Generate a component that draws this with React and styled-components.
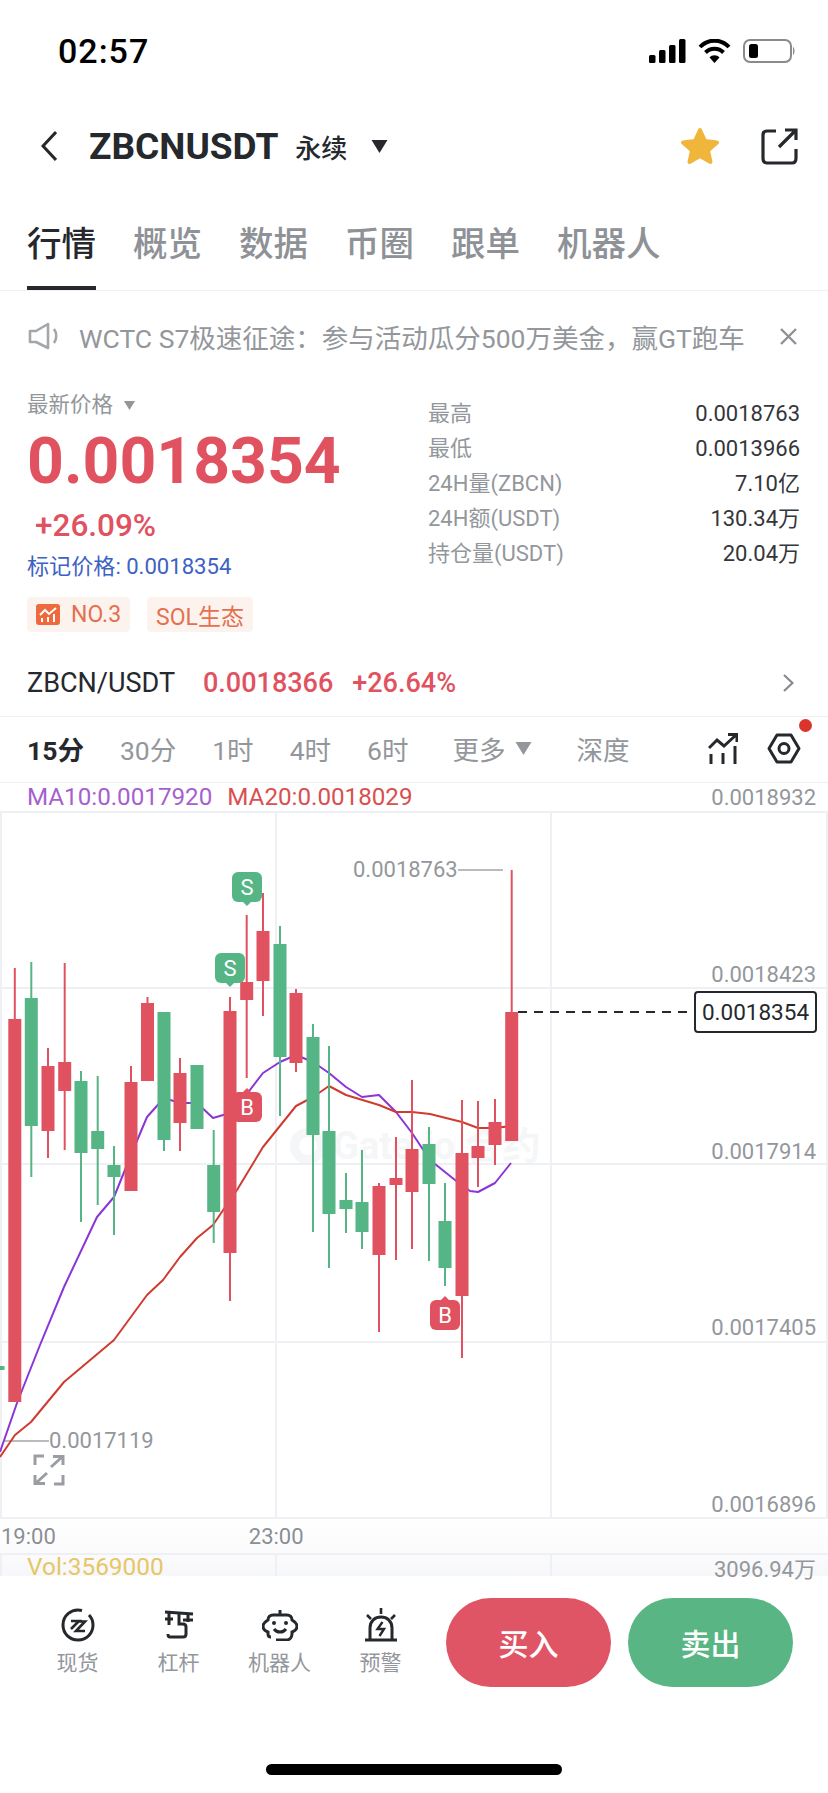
import React from "react";
import styled, { createGlobalStyle } from "styled-components";

const RED = "#e0525f";
const GREEN = "#55b584";
const GREY = "#93979c";
const DARK = "#25282c";
const LINE = "#eef0f4";

const GlobalStyle = createGlobalStyle`
  html, body { margin: 0; padding: 0; background: #fff; }
  body { font-family: Roboto, "Noto Sans CJK SC", sans-serif; color: ${DARK}; }
  * { box-sizing: border-box; }
`;

// [x, wickTop, bodyTop, bodyBottom, wickBottom, colour]
const candles = [
  [-2, 1366, 1366, 1370, 1370, "g"],
  [14.8, 968, 1019, 1402, 1402, "r"],
  [31.3, 962, 998, 1126, 1177, "g"],
  [48, 1048, 1066, 1131, 1158, "r"],
  [64.7, 963, 1062, 1091, 1150, "r"],
  [81, 1071, 1081, 1153, 1222, "g"],
  [97.7, 1076, 1131, 1149, 1205, "g"],
  [114, 1146, 1165, 1177, 1235, "g"],
  [131, 1066, 1082, 1191, 1191, "r"],
  [147.5, 997, 1003, 1081, 1081, "r"],
  [164, 1012, 1012, 1140, 1151, "g"],
  [180, 1058, 1073, 1123, 1151, "r"],
  [197, 1065, 1065, 1129, 1129, "g"],
  [213.7, 1130, 1165, 1212, 1243, "g"],
  [230, 997, 1011, 1253, 1301, "r"],
  [246.7, 915, 982, 1000, 1078, "r"],
  [263, 893, 931, 981, 1016, "r"],
  [280, 926, 944, 1057, 1116, "g"],
  [296, 989, 993, 1063, 1072, "r"],
  [313, 1024, 1037, 1135, 1232, "g"],
  [329, 1046, 1131, 1214, 1268, "g"],
  [346, 1173, 1200, 1209, 1233, "g"],
  [362, 1150, 1202, 1232, 1249, "g"],
  [379, 1183, 1186, 1255, 1332, "r"],
  [396, 1137, 1178, 1185, 1260, "r"],
  [412, 1080, 1149, 1192, 1249, "r"],
  [429, 1127, 1144, 1184, 1261, "g"],
  [445, 1183, 1221, 1268, 1286, "g"],
  [462, 1100, 1153, 1296, 1358, "r"],
  [478, 1101, 1146, 1158, 1187, "r"],
  [495, 1099, 1122, 1145, 1165, "r"],
  [511.7, 870, 1012, 1141, 1141, "r"],
];

const ma10 =
  "0,1452 17,1403 40,1345 64,1287 97,1217 114,1197 131,1155 147,1117 164,1098 180,1103 197,1103 213,1118 230,1113 246,1095 263,1073 280,1062 296,1055 313,1062 329,1073 346,1087 362,1097 379,1095 396,1112 412,1133 430,1160 455,1180 470,1191 478,1192 495,1183 511,1163";
const ma20 =
  "0,1457 15,1435 31,1422 64,1382 114,1340 147,1295 163,1280 180,1257 197,1238 213,1225 230,1200 237,1190 263,1147 296,1106 313,1097 329,1086 346,1095 379,1105 396,1112 412,1112 430,1114 462,1122 478,1128 495,1128 511,1126";

const axisPrices = [
  ["0.0018423", 975],
  ["0.0017914", 1152],
  ["0.0017405", 1328],
  ["0.0016896", 1505],
];

const Page = styled.div`
  width: 828px;
  height: 1793px;
  overflow: hidden;
  background: #fff;
  display: flex;
  flex-direction: column;
`;

const StatusBar = styled.div`
  height: 102px;
  padding: 0 33px 0 58px;
  display: flex;
  justify-content: space-between;
  align-items: flex-start;
`;

const Time = styled.div`
  margin-top: 33px;
  font-size: 34px;
  line-height: 36px;
  letter-spacing: 1px;
  font-weight: 500;
  color: #000;
`;

const StatusIcons = styled.div`
  margin-top: 39px;
  display: flex;
  align-items: center;
  gap: 12px;
`;

const Header = styled.div`
  height: 88px;
  padding: 0 30px 0 41px;
  display: flex;
  align-items: center;
`;

const Symbol = styled.div`
  margin-left: 32px;
  font-size: 37px;
  font-weight: 700;
  color: ${DARK};
`;

const Suffix = styled.div`
  margin-left: 17px;
  font-size: 26px;
  font-weight: 500;
`;

const Caret = styled.div`
  margin-left: 24px;
  display: flex;
`;

const HeaderRight = styled.div`
  margin-left: auto;
  display: flex;
  align-items: center;
  gap: 41px;
`;

const Tabs = styled.div`
  height: 101px;
  padding: 0 27px;
  display: flex;
  gap: 37px;
  border-bottom: 1px solid ${LINE};
`;

const Tab = styled.div`
  height: 100px;
  padding-top: 32px;
  font-size: 34.5px;
  line-height: 44px;
  font-weight: 500;
  color: ${(p) => (p.$active ? DARK : "#8e9297")};
  border-bottom: 4px solid ${(p) => (p.$active ? DARK : "transparent")};
`;

const Notice = styled.div`
  height: 90px;
  padding: 0 31px 0 28px;
  display: flex;
  align-items: center;
`;

const NoticeText = styled.div`
  margin-left: 19px;
  font-size: 26.5px;
  color: ${GREY};
  white-space: nowrap;
`;

const NoticeClose = styled.div`
  margin-left: auto;
  display: flex;
`;

const Market = styled.div`
  height: 269px;
  padding: 0 28px 0 27px;
  display: flex;
`;

const PriceCol = styled.div`
  width: 401px;
  padding-top: 13px;
`;

const PriceLabel = styled.div`
  display: flex;
  align-items: center;
  gap: 10px;
  font-size: 21.5px;
  line-height: 22px;
  color: ${GREY};
`;

const BigPrice = styled.div`
  margin-top: 12px;
  font-size: 64.3px;
  line-height: 66px;
  font-weight: 700;
  color: ${RED};
`;

const Change = styled.div`
  margin: 14px 0 0 8px;
  font-size: 31.5px;
  line-height: 36px;
  font-weight: 500;
  color: ${RED};
`;

const MarkPrice = styled.div`
  margin-top: 9px;
  font-size: 22.1px;
  line-height: 26px;
  color: #3d62c4;
`;

const TagRow = styled.div`
  margin-top: 18px;
  display: flex;
  gap: 17px;
`;

const Tag = styled.div`
  height: 35px;
  padding: 0 9px;
  display: flex;
  align-items: center;
  gap: 11px;
  border-radius: 4px;
  background: #fdf3ee;
  color: #e4704f;
  font-size: 23px;
`;

const StatsCol = styled.div`
  flex: 1;
  padding-top: 14.5px;
`;

const StatRow = styled.div`
  height: 35px;
  display: flex;
  justify-content: space-between;
  align-items: baseline;
  font-size: 22px;
  line-height: 35px;
`;

const StatLabel = styled.span`
  color: ${GREY};
`;

const StatValue = styled.span`
  color: #33363a;
`;

const SpotRow = styled.div`
  height: 67px;
  padding: 0 34px 0 27px;
  display: flex;
  align-items: center;
  border-bottom: 1px solid ${LINE};
  font-size: 27px;
`;

const SpotName = styled.span`
  color: ${DARK};
`;

const SpotPrice = styled.span`
  margin-left: ${(p) => p.$gap}px;
  color: ${RED};
  font-weight: 500;
`;

const SpotArrow = styled.div`
  margin-left: auto;
  display: flex;
`;

const Periods = styled.div`
  position: relative;
  height: 66px;
  padding: 0 27px 2px;
  display: flex;
  align-items: center;
  gap: 36px;
  border-bottom: 1px solid ${LINE};
`;

const Period = styled.div`
  margin-left: ${(p) => p.$shift || 0}px;
  display: flex;
  align-items: center;
  gap: 10px;
  font-size: 26.5px;
  font-weight: ${(p) => (p.$active ? 700 : 400)};
  color: ${(p) => (p.$active ? DARK : GREY)};
`;

const PeriodIcons = styled.div`
  margin-left: auto;
  display: flex;
  align-items: center;
  gap: 29px;
`;

const RedDot = styled.div`
  position: absolute;
  top: 2px;
  right: 16px;
  width: 13px;
  height: 13px;
  border-radius: 50%;
  background: #d9352c;
`;

const MaRow = styled.div`
  height: 28px;
  padding: 0 12px 0 27px;
  display: flex;
  align-items: center;
  gap: 15px;
  font-size: 24.2px;
`;

const MaValue = styled.span`
  color: ${(p) => p.$color};
`;

const AxisTop = styled.span`
  margin-left: auto;
  font-size: 22px;
  color: ${GREY};
`;

const Chart = styled.div`
  position: relative;
  height: 708px;
  overflow: hidden;
`;

const ChartSvg = styled.svg`
  position: absolute;
  inset: 0;
  display: block;
`;

const Watermark = styled.div`
  position: absolute;
  left: 290px;
  top: 314px;
  display: flex;
  align-items: center;
  gap: 7px;
  font-size: 38px;
  line-height: 42px;
  font-weight: 700;
  color: #f5f6f7;
  white-space: nowrap;
`;

const WatermarkRing = styled.span`
  width: 36px;
  height: 36px;
  border-radius: 50%;
  border: 9px solid #f5f6f7;
`;

const AxisPrice = styled.div`
  position: absolute;
  right: 12px;
  top: ${(p) => p.$y - 811 - 13}px;
  font-size: 22px;
  line-height: 26px;
  color: ${GREY};
`;

const Extreme = styled.div`
  position: absolute;
  left: ${(p) => p.$x}px;
  top: ${(p) => p.$y - 811 - 13}px;
  font-size: 22px;
  line-height: 26px;
  color: ${GREY};
`;

const PriceBox = styled.div`
  position: absolute;
  left: 694px;
  top: 180px;
  width: 123px;
  height: 42px;
  display: flex;
  align-items: center;
  justify-content: center;
  background: #fff;
  border: 2px solid ${DARK};
  border-radius: 4px;
  font-size: 22.5px;
  color: ${DARK};
`;

const Mark = styled.div`
  position: absolute;
  left: ${(p) => p.$x}px;
  top: ${(p) => p.$y - 811}px;
  width: 30px;
  height: 30px;
  display: flex;
  align-items: center;
  justify-content: center;
  border-radius: 6px;
  background: ${(p) => (p.$buy ? RED : GREEN)};
  color: #fff;
  font-size: 22px;

  &::after {
    content: "";
    position: absolute;
    left: 11px;
    ${(p) => (p.$buy ? "top: -4px;" : "bottom: -4px;")}
    border-left: 4px solid transparent;
    border-right: 4px solid transparent;
    ${(p) => (p.$buy ? `border-bottom: 4px solid ${RED};` : `border-top: 4px solid ${GREEN};`)}
  }
`;

const ExpandIcon = styled.svg`
  position: absolute;
  left: 33px;
  top: 643px;
`;

const TimeAxis = styled.div`
  height: 34px;
  padding-left: 1px;
  display: flex;
  align-items: center;
  gap: 193px;
  font-size: 22px;
  color: #8b8f94;
  background: linear-gradient(#fff, #fbfbfd);
`;

const VolRow = styled.div`
  height: 23px;
  padding: 2px 12px 0 27px;
  display: flex;
  justify-content: space-between;
  align-items: center;
  border-top: 2px solid ${LINE};
  background:
    linear-gradient(${LINE}, ${LINE}) 0 0 / 2px 100% no-repeat,
    linear-gradient(${LINE}, ${LINE}) 275px 0 / 2px 100% no-repeat,
    linear-gradient(${LINE}, ${LINE}) 550px 0 / 2px 100% no-repeat,
    linear-gradient(#fbfbfd, #f6f7f9);
`;

const VolLabel = styled.span`
  font-size: 24.4px;
  color: #e6c667;
`;

const VolValue = styled.span`
  font-size: 22px;
  color: ${GREY};
`;

const BottomBar = styled.div`
  flex: 1;
  display: flex;
  flex-direction: column;
`;

const Actions = styled.div`
  height: 111px;
  padding: 22px 0 0 27px;
  display: flex;
`;

const NavItem = styled.div`
  width: 101px;
  display: flex;
  flex-direction: column;
  align-items: center;
`;

const NavIcon = styled.div`
  height: 36px;
  margin-top: 9px;
  display: flex;
  align-items: center;
`;

const NavLabel = styled.div`
  margin-top: 6px;
  font-size: 21px;
  line-height: 28px;
  color: ${GREY};
`;

const TradeButton = styled.div`
  width: 165px;
  height: 89px;
  margin-left: ${(p) => p.$gap}px;
  padding-bottom: 1px;
  display: flex;
  align-items: center;
  justify-content: center;
  border-radius: 45px;
  background: ${(p) => p.$color};
  color: #fff;
  font-size: 30px;
  font-weight: 500;
`;

const HomeIndicator = styled.div`
  width: 296px;
  height: 11px;
  margin: 77px auto 0;
  border-radius: 6px;
  background: #000;
`;

const Triangle = ({ w, h, color }) => (
  <svg width={w} height={h} viewBox="0 0 16 13">
    <path d="M0 0H16L8 13Z" fill={color} />
  </svg>
);

const Signal = () => (
  <svg width="37" height="24" viewBox="0 0 37 24" fill="#000">
    <rect x="0" y="16" width="6.5" height="8" rx="1.5" />
    <rect x="10" y="11" width="6.5" height="13" rx="1.5" />
    <rect x="20" y="6" width="6.5" height="18" rx="1.5" />
    <rect x="30" y="0" width="6.5" height="24" rx="1.5" />
  </svg>
);

const Wifi = () => (
  <svg width="33" height="24" viewBox="0 0 33 24" fill="none" stroke="#000" strokeWidth="4">
    <path d="M2 8C10-.5 23-.5 31 8" />
    <path d="M7.5 13.5C12.5 8.5 20.5 8.5 25.5 13.5" />
    <path d="M16.5 24L11.5 18.5C14 15.5 19 15.5 21.5 18.5Z" fill="#000" stroke="none" />
  </svg>
);

const Battery = () => (
  <svg width="52" height="24" viewBox="0 0 52 24">
    <rect x="1" y="1" width="47" height="22" rx="6" fill="none" stroke="#8a8a8a" strokeWidth="2" />
    <rect x="6" y="5" width="9" height="14" rx="2.5" fill="#000" />
    <path d="M50 8C52 9 52 15 50 16Z" fill="#8a8a8a" />
  </svg>
);

const BackIcon = () => (
  <svg width="16" height="30" viewBox="0 0 16 30" fill="none" stroke={DARK} strokeWidth="3">
    <path d="M15 1L2 15L15 29" />
  </svg>
);

const StarIcon = () => (
  <svg width="40" height="38" viewBox="0 0 40 38">
    <path
      d="M20 3L25 14L37 15.5L28 23.5L30.5 35L20 29L9.5 35L12 23.5L3 15.5L15 14Z"
      fill="#f0b63c"
      stroke="#f0b63c"
      strokeWidth="4"
      strokeLinejoin="round"
    />
  </svg>
);

const ShareIcon = () => (
  <svg width="37" height="37" viewBox="0 0 37 37" fill="none" stroke={DARK} strokeWidth="3.2">
    <path d="M15 3H6Q2 3 2 7V30Q2 35 6 35H31Q35 35 35 30V21" />
    <path d="M18 19L35 2M24 2H35V12" />
  </svg>
);

const SpeakerIcon = () => (
  <svg width="32" height="28" viewBox="0 0 32 28" fill="none" stroke="#a3a6aa" strokeWidth="2.6">
    <path d="M2 9H8L20 2V26L8 20H2Z" strokeLinejoin="round" />
    <path d="M26 7C29 11 29 17 26 21" />
  </svg>
);

const CloseIcon = () => (
  <svg width="17" height="17" viewBox="0 0 17 17" stroke="#8e9297" strokeWidth="2.4">
    <path d="M1 1L16 16M16 1L1 16" />
  </svg>
);

const RankIcon = () => (
  <svg width="24" height="21" viewBox="0 0 24 21">
    <rect width="24" height="21" rx="3" fill="#ee6a3c" />
    <path d="M4 11L9 6L13 10L20 4" fill="none" stroke="#fff" strokeWidth="2" />
    <path d="M6 14V18M12 13V18M18 10V18" stroke="#fff" strokeWidth="2" />
  </svg>
);

const Chevron = () => (
  <svg width="11" height="18" viewBox="0 0 11 18" fill="none" stroke="#85898e" strokeWidth="2.2">
    <path d="M1 1L9.5 9L1 17" />
  </svg>
);

const TrendIcon = () => (
  <svg width="30" height="32" viewBox="0 0 30 32" fill="none" stroke={DARK} strokeWidth="3">
    <path d="M1 15L9 7L16 13L28 2M20 1.5H29V9" />
    <path d="M3 21V31M15 20V31M27 13V31" />
  </svg>
);

const HexIcon = () => (
  <svg width="34" height="31" viewBox="0 0 34 31" fill="none" stroke={DARK} strokeWidth="3">
    <path d="M2 15.5L10 2H24L32 15.5L24 29H10Z" strokeLinejoin="round" />
    <circle cx="17" cy="15.5" r="5" />
  </svg>
);

const SpotIcon = () => (
  <svg width="34" height="34" viewBox="0 0 34 34" fill="none" stroke={DARK} strokeWidth="3">
    <path d="M21 2.5C10 0 2 8 2 17C2 26 9 32 17 32C26 32 32 25 32 17C32 13 31 10 28 7" />
    <path d="M10 13H18L10 21M16 13.5H24L15 23H24" strokeWidth="2.6" />
  </svg>
);

const LeverIcon = () => (
  <svg width="30" height="30" viewBox="0 0 30 30" fill="none" stroke={DARK} strokeWidth="3">
    <path d="M1 2L29 4" />
    <path d="M5 3V15M1 9H9" />
    <path d="M15 3V14H19Q22 14 22 17V24Q22 27 19 27H6Q4 27 4 24" />
    <path d="M24 4V12M19 10H29" />
  </svg>
);

const RobotIcon = () => (
  <svg width="36" height="32" viewBox="0 0 36 32" fill="none" stroke={DARK} strokeWidth="3">
    <path d="M18 1V6" />
    <path d="M9 28C7 28 6 27 6 25V23C3 22 1 20 1 17C1 14 3 13 6 11C6 8 8 6 11 6H25C28 6 30 8 30 11C33 13 35 14 35 17C35 20 33 22 30 23V25C30 29 27 31 25 31H14" />
    <circle cx="12" cy="14" r="2" fill={DARK} stroke="none" />
    <circle cx="24" cy="14" r="2" fill={DARK} stroke="none" />
    <path d="M12 20C15 24 21 24 24 20" />
  </svg>
);

const AlarmIcon = () => (
  <svg width="34" height="34" viewBox="0 0 34 34" fill="none" stroke={DARK} strokeWidth="3">
    <path d="M17 0V6M3 7L7 11M31 7L27 11" strokeWidth="2.6" />
    <path d="M6 32V20C6 13 11 9 17 9C23 9 28 13 28 20V32" />
    <path d="M1 32H33" />
    <path d="M18.5 14L13.5 21H20L15.5 28" strokeWidth="2.4" />
  </svg>
);

const CandleChart = () => (
  <ChartSvg width="828" height="708" viewBox="0 811 828 708">
    <g stroke={LINE} strokeWidth="2" fill="none">
      <path d="M0 812H828M0 988H828M0 1164H828M0 1342H828M0 1518H828" />
      <path d="M1 811V1519M276 811V1519M551 811V1519M827 811V1519" />
    </g>
    <path d="M458 870H503M5 1441H49" stroke="#a2a5a9" strokeWidth="1.5" />
    <path d="M518 1012H694" stroke={DARK} strokeWidth="2" strokeDasharray="9 7" />
    <polyline points={ma10} fill="none" stroke="#8b35d6" strokeWidth="2" strokeLinejoin="round" />
    <polyline points={ma20} fill="none" stroke="#cf3b30" strokeWidth="2" strokeLinejoin="round" />
    {candles.map(([x, top, open, close, bottom, kind]) => {
      const fill = kind === "r" ? RED : GREEN;
      return (
        <g key={x} fill={fill}>
          <rect x={x - 1} y={top} width="2" height={bottom - top} />
          <rect x={x - 6.5} y={open} width="13" height={close - open} />
        </g>
      );
    })}
  </ChartSvg>
);

export default function App() {
  return (
    <Page>
      <GlobalStyle />
      <StatusBar>
        <Time>02:57</Time>
        <StatusIcons>
          <Signal />
          <Wifi />
          <Battery />
        </StatusIcons>
      </StatusBar>

      <Header>
        <BackIcon />
        <Symbol>ZBCNUSDT</Symbol>
        <Suffix>永续</Suffix>
        <Caret>
          <Triangle w={17} h={13} color={DARK} />
        </Caret>
        <HeaderRight>
          <StarIcon />
          <ShareIcon />
        </HeaderRight>
      </Header>

      <Tabs>
        <Tab $active>行情</Tab>
        <Tab>概览</Tab>
        <Tab>数据</Tab>
        <Tab>币圈</Tab>
        <Tab>跟单</Tab>
        <Tab>机器人</Tab>
      </Tabs>

      <Notice>
        <SpeakerIcon />
        <NoticeText>WCTC S7极速征途：参与活动瓜分500万美金，赢GT跑车</NoticeText>
        <NoticeClose>
          <CloseIcon />
        </NoticeClose>
      </Notice>

      <Market>
        <PriceCol>
          <PriceLabel>
            最新价格
            <Triangle w={13} h={9} color={GREY} />
          </PriceLabel>
          <BigPrice>0.0018354</BigPrice>
          <Change>+26.09%</Change>
          <MarkPrice>标记价格: 0.0018354</MarkPrice>
          <TagRow>
            <Tag>
              <RankIcon />
              NO.3
            </Tag>
            <Tag>SOL生态</Tag>
          </TagRow>
        </PriceCol>
        <StatsCol>
          <StatRow>
            <StatLabel>最高</StatLabel>
            <StatValue>0.0018763</StatValue>
          </StatRow>
          <StatRow>
            <StatLabel>最低</StatLabel>
            <StatValue>0.0013966</StatValue>
          </StatRow>
          <StatRow>
            <StatLabel>24H量(ZBCN)</StatLabel>
            <StatValue>7.10亿</StatValue>
          </StatRow>
          <StatRow>
            <StatLabel>24H额(USDT)</StatLabel>
            <StatValue>130.34万</StatValue>
          </StatRow>
          <StatRow>
            <StatLabel>持仓量(USDT)</StatLabel>
            <StatValue>20.04万</StatValue>
          </StatRow>
        </StatsCol>
      </Market>

      <SpotRow>
        <SpotName>ZBCN/USDT</SpotName>
        <SpotPrice $gap={28}>0.0018366</SpotPrice>
        <SpotPrice $gap={19}>+26.64%</SpotPrice>
        <SpotArrow>
          <Chevron />
        </SpotArrow>
      </SpotRow>

      <Periods>
        <Period $active>15分</Period>
        <Period>30分</Period>
        <Period>1时</Period>
        <Period>4时</Period>
        <Period>6时</Period>
        <Period $shift={8}>
          更多
          <Triangle w={17} h={13} color={GREY} />
        </Period>
        <Period $shift={8}>深度</Period>
        <PeriodIcons>
          <TrendIcon />
          <HexIcon />
        </PeriodIcons>
        <RedDot />
      </Periods>

      <MaRow>
        <MaValue $color="#a65fd0">MA10:0.0017920</MaValue>
        <MaValue $color="#d95050">MA20:0.0018029</MaValue>
        <AxisTop>0.0018932</AxisTop>
      </MaRow>

      <Chart>
        <Watermark>
          <WatermarkRing />
          Gate.io 合约
        </Watermark>
        <CandleChart />
        {axisPrices.map(([text, y]) => (
          <AxisPrice key={text} $y={y}>
            {text}
          </AxisPrice>
        ))}
        <Extreme $x={353} $y={870}>0.0018763</Extreme>
        <Extreme $x={49} $y={1441}>0.0017119</Extreme>
        <PriceBox>0.0018354</PriceBox>
        <Mark $x={232} $y={872}>S</Mark>
        <Mark $x={215} $y={953}>S</Mark>
        <Mark $x={232} $y={1092} $buy>B</Mark>
        <Mark $x={430} $y={1300} $buy>B</Mark>
        <ExpandIcon width="32" height="32" viewBox="0 0 32 32" fill="none" stroke="#9a9ea3" strokeWidth="3">
          <path d="M11 2H2V11M21 30H30V21" />
          <path d="M18 13L29 3M20 2.5H30V11M14 19L3 29M12 29.5H2V21" />
        </ExpandIcon>
      </Chart>

      <TimeAxis>
        <span>19:00</span>
        <span>23:00</span>
      </TimeAxis>

      <VolRow>
        <VolLabel>Vol:3569000</VolLabel>
        <VolValue>3096.94万</VolValue>
      </VolRow>

      <BottomBar>
        <Actions>
          <NavItem>
            <NavIcon>
              <SpotIcon />
            </NavIcon>
            <NavLabel>现货</NavLabel>
          </NavItem>
          <NavItem>
            <NavIcon>
              <LeverIcon />
            </NavIcon>
            <NavLabel>杠杆</NavLabel>
          </NavItem>
          <NavItem>
            <NavIcon>
              <RobotIcon />
            </NavIcon>
            <NavLabel>机器人</NavLabel>
          </NavItem>
          <NavItem>
            <NavIcon>
              <AlarmIcon />
            </NavIcon>
            <NavLabel>预警</NavLabel>
          </NavItem>
          <TradeButton $gap={15} $color="#e05566">买入</TradeButton>
          <TradeButton $gap={17} $color="#59b583">卖出</TradeButton>
        </Actions>
        <HomeIndicator />
      </BottomBar>
    </Page>
  );
}
